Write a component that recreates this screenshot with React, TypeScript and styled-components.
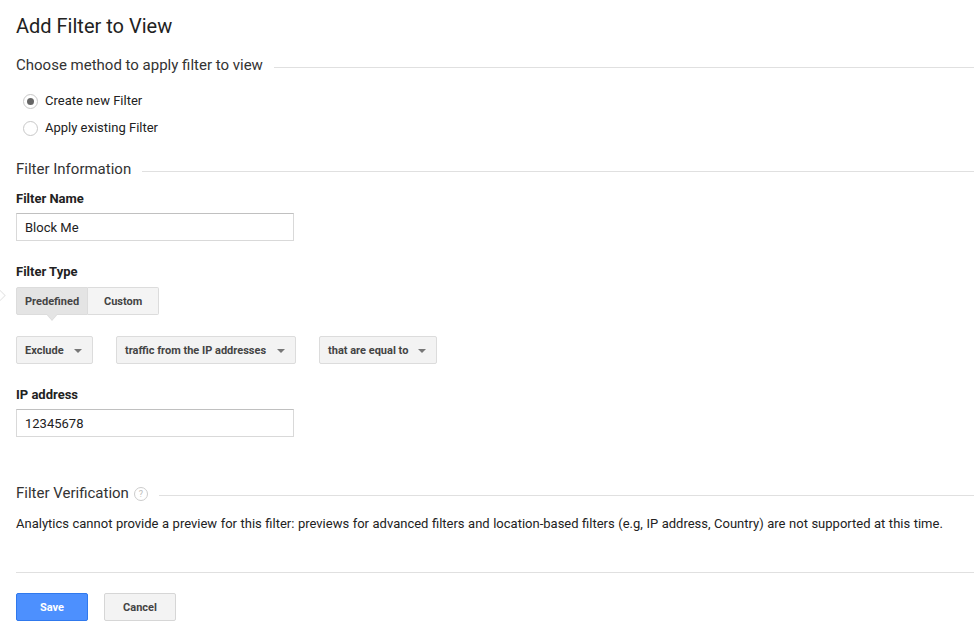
import React from "react";
import styled, { createGlobalStyle } from "styled-components";

const Global = createGlobalStyle`
  html, body { margin: 0; padding: 0; background: #fff; }
  body { font-family: Roboto, "Noto Sans", Arial, sans-serif; color: #222; overflow: hidden; }
  * { box-sizing: border-box; }
`;

const Page = styled.div`
  position: relative;
  width: 974px;
  height: 635px;
  padding: 0 0 0 16px;
`;

const Title = styled.h1`
  margin: 0;
  padding-top: 14px;
  font-size: 20px;
  font-weight: 400;
  line-height: 24px;
  color: #222;
`;

const SectionHead = styled.div<{ $mt: number }>`
  display: flex;
  align-items: center;
  gap: 11px;
  margin-top: ${(p) => p.$mt}px;
  font-size: 15px;
  line-height: 20px;
  color: #333;
  &::after {
    content: "";
    flex: 1;
    height: 1px;
    background: #e0e0e0;
    margin-top: 4px;
  }
`;

const RadioList = styled.div`
  display: flex;
  flex-direction: column;
  gap: 11px;
  margin-top: 18px;
  padding-left: 7px;
`;

const RadioRow = styled.label`
  display: flex;
  align-items: center;
  gap: 7px;
  font-size: 13px;
  line-height: 16px;
  color: #222;
`;

const RadioCircle = styled.span<{ $checked?: boolean }>`
  width: 15px;
  height: 15px;
  border-radius: 50%;
  border: 1px solid #c8c8c8;
  background: #fff;
  display: flex;
  align-items: center;
  justify-content: center;
  &::after {
    content: "";
    width: 7px;
    height: 7px;
    border-radius: 50%;
    background: ${(p) => (p.$checked ? "#666" : "transparent")};
  }
`;

const FieldLabel = styled.div<{ $mt: number }>`
  margin-top: ${(p) => p.$mt}px;
  font-size: 13px;
  font-weight: 700;
  line-height: 16px;
  color: #222;
`;

const TextInput = styled.div`
  margin-top: 6px;
  width: 278px;
  height: 28px;
  border: 1px solid #d9d9d9;
  border-top-color: #c0c0c0;
  padding: 0 8px;
  font-size: 13px;
  line-height: 27px;
  color: #222;
`;

const Toggle = styled.div`
  position: relative;
  display: flex;
  margin-top: 7px;
  width: max-content;
`;

const ToggleBtn = styled.div<{ $active?: boolean; $first?: boolean }>`
  position: relative;
  height: 28px;
  padding: 0 ${(p) => (p.$first ? 8 : 15)}px;
  min-width: ${(p) => (p.$first ? 72 : 71)}px;
  display: flex;
  align-items: center;
  justify-content: center;
  font-size: 11px;
  font-weight: 700;
  color: #444;
  background: ${(p) => (p.$active ? "#e4e4e4" : "#f4f4f4")};
  border: 1px solid #dcdcdc;
  border-left-width: ${(p) => (p.$first ? 1 : 0)}px;
  border-radius: ${(p) => (p.$first ? "2px 0 0 2px" : "0 2px 2px 0")};
  ${(p) =>
    p.$active
      ? `
    &::after {
      content: "";
      position: absolute;
      left: 50%;
      bottom: -7px;
      margin-left: -6px;
      width: 0; height: 0;
      border-left: 6px solid transparent;
      border-right: 6px solid transparent;
      border-top: 7px solid #dcdcdc;
    }
    &::before {
      content: "";
      position: absolute;
      left: 50%;
      bottom: -6px;
      margin-left: -5px;
      width: 0; height: 0;
      border-left: 5px solid transparent;
      border-right: 5px solid transparent;
      border-top: 6px solid #e4e4e4;
      z-index: 1;
    }
  `
      : ""}
`;

const GhostArrow = styled.div`
  position: absolute;
  left: -5px;
  top: 291px;
  width: 9px;
  height: 9px;
  border: 1px solid #e6e6e6;
  transform: rotate(45deg);
  background: #fff;
`;

const SelectRow = styled.div`
  display: flex;
  gap: 23px;
  margin-top: 21px;
`;

const Select = styled.div<{ $w: number }>`
  width: ${(p) => p.$w}px;
  height: 28px;
  display: flex;
  align-items: center;
  justify-content: space-between;
  padding: 0 10px 0 8px;
  font-size: 11px;
  font-weight: 700;
  color: #444;
  background: #f3f3f3;
  border: 1px solid #dcdcdc;
  border-radius: 2px;
  &::after {
    content: "";
    width: 0;
    height: 0;
    border-left: 4px solid transparent;
    border-right: 4px solid transparent;
    border-top: 4px solid #777;
    margin-top: 2px;
  }
`;

const HelpIcon = styled.span`
  width: 14px;
  height: 14px;
  border-radius: 50%;
  border: 1px solid #ccc;
  color: #bbb;
  font-size: 9px;
  display: inline-flex;
  align-items: center;
  justify-content: center;
  margin-left: -6px;
  margin-top: 2px;
`;

const Note = styled.p`
  margin: 13px 0 0;
  font-size: 13px;
  line-height: 16px;
  word-spacing: 0.3px;
  color: #222;
`;

const Divider = styled.div`
  margin-top: 40px;
  height: 1px;
  background: #e0e0e0;
`;

const Actions = styled.div`
  display: flex;
  gap: 16px;
  margin-top: 20px;
`;

const Button = styled.button<{ $primary?: boolean }>`
  width: 72px;
  height: 28px;
  font-family: inherit;
  font-size: 11px;
  font-weight: 700;
  border-radius: 2px;
  cursor: pointer;
  color: ${(p) => (p.$primary ? "#fff" : "#444")};
  background: ${(p) => (p.$primary ? "#4d90fe" : "#f3f3f3")};
  border: 1px solid ${(p) => (p.$primary ? "#3079ed" : "#d6d6d6")};
`;

export default function App() {
  return (
    <>
      <Global />
      <Page>
        <Title>Add Filter to View</Title>
        <SectionHead $mt={17}>Choose method to apply filter to view</SectionHead>
        <RadioList>
          <RadioRow>
            <RadioCircle $checked />
            Create new Filter
          </RadioRow>
          <RadioRow>
            <RadioCircle />
            Apply existing Filter
          </RadioRow>
        </RadioList>
        <SectionHead $mt={23}>Filter Information</SectionHead>
        <FieldLabel $mt={12}>Filter Name</FieldLabel>
        <TextInput>Block Me</TextInput>
        <FieldLabel $mt={23}>Filter Type</FieldLabel>
        <GhostArrow />
        <Toggle>
          <ToggleBtn $active $first>
            Predefined
          </ToggleBtn>
          <ToggleBtn>Custom</ToggleBtn>
        </Toggle>
        <SelectRow>
          <Select $w={77}>Exclude</Select>
          <Select $w={180}>traffic from the IP addresses</Select>
          <Select $w={118}>that are equal to</Select>
        </SelectRow>
        <FieldLabel $mt={23}>IP address</FieldLabel>
        <TextInput>12345678</TextInput>
        <SectionHead $mt={46}>
          Filter Verification <HelpIcon>?</HelpIcon>
        </SectionHead>
        <Note>
          Analytics cannot provide a preview for this filter: previews for advanced filters and
          location-based filters (e.g, IP address, Country) are not supported at this time.
        </Note>
        <Divider />
        <Actions>
          <Button $primary>Save</Button>
          <Button>Cancel</Button>
        </Actions>
      </Page>
    </>
  );
}
